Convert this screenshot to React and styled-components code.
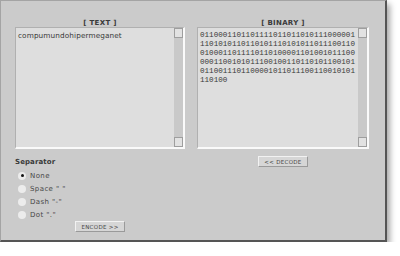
import React from 'react'
import styled, { createGlobalStyle } from 'styled-components'

const GlobalStyle = createGlobalStyle`
  html, body {
    margin: 0;
    padding: 0;
    background: #fff;
  }
  body {
    font-family: 'DejaVu Sans', Verdana, sans-serif;
  }
`

const Panel = styled.div`
  box-sizing: border-box;
  width: 387px;
  height: 242px;
  background: #cbcbcb;
  border-top: 1px solid #a4a4a4;
  border-left: 1px solid #a4a4a4;
  border-right: 2px solid #555;
  border-bottom: 2px solid #555;
  box-shadow: 3px 4px 6px rgba(0, 0, 0, 0.35);
  padding: 18px 0 0 14px;
  display: grid;
  grid-template-columns: 170px 172px;
  column-gap: 12px;
  align-items: start;
`

const Column = styled.div`
  display: flex;
  flex-direction: column;
`

const Heading = styled.div`
  height: 8px;
  line-height: 9px;
  text-align: center;
  font-size: 7px;
  font-weight: bold;
  letter-spacing: 0.3px;
  color: #3a3a3a;
`

const Box = styled.div`
  box-sizing: border-box;
  height: 122px;
  display: flex;
  background: #dedede;
  border-top: 1px solid #b0b0b0;
  border-left: 1px solid #b0b0b0;
  border-right: 2px solid #fafafa;
  border-bottom: 2px solid #fafafa;
`

const Content = styled.div`
  flex: 1;
  padding: 3px 2px;
  color: #3a3a3a;
  font-size: ${p => (p.$mono ? '7.6px' : '7.3px')};
  font-family: ${p => (p.$mono ? "'Liberation Mono', 'Courier New', monospace" : "'DejaVu Sans', Verdana, sans-serif")};
  line-height: 9px;
  letter-spacing: ${p => (p.$mono ? '0' : '0.1px')};
  white-space: pre;
`

const Scroll = styled.div`
  width: 9px;
  display: flex;
  flex-direction: column;
  justify-content: space-between;
  background: #c9c9c9;
`

const ScrollCap = styled.div`
  box-sizing: border-box;
  height: 10px;
  background: #e2e2e2;
  border: 1px solid #9e9e9e;
`

const SeparatorBlock = styled.div`
  display: flex;
  flex-direction: column;
  padding-top: 9px;
`

const SeparatorTitle = styled.div`
  font-size: 7px;
  font-weight: bold;
  color: #3a3a3a;
  height: 9px;
  line-height: 9px;
  letter-spacing: 0.1px;
  margin-bottom: 2px;
`

const RadioRow = styled.label`
  display: flex;
  align-items: center;
  gap: 4px;
  height: 13px;
  padding-left: 3px;
  font-size: 7px;
  letter-spacing: 0.4px;
  color: #484848;
`

const RadioDot = styled.span`
  box-sizing: border-box;
  width: 8px;
  height: 8px;
  border-radius: 50%;
  background: #ececec;
  display: flex;
  align-items: center;
  justify-content: center;

  &::after {
    content: '';
    width: 3px;
    height: 3px;
    border-radius: 50%;
    background: ${p => (p.$checked ? '#111' : 'transparent')};
  }
`

const ButtonRow = styled.div`
  display: flex;
  justify-content: center;
  margin-top: ${p => p.$top}px;
`

const Button = styled.div`
  box-sizing: border-box;
  width: 50px;
  height: 11px;
  display: flex;
  align-items: center;
  justify-content: center;
  background: #d6d6d6;
  border-top: 1px solid #f2f2f2;
  border-left: 1px solid #f2f2f2;
  border-right: 1px solid #9a9a9a;
  border-bottom: 1px solid #9a9a9a;
  font-size: 5.5px;
  letter-spacing: 0.3px;
  color: #444;
`

const TEXT = 'compumundohipermeganet'

const toBinary = str =>
  str
    .split('')
    .map(c => c.charCodeAt(0).toString(2).padStart(8, '0'))
    .join('')

const chunk = (s, n) => {
  const out = []
  for (let i = 0; i < s.length; i += n) out.push(s.slice(i, i + n))
  return out
}

const separators = [
  { label: 'None', checked: true },
  { label: 'Space " "' },
  { label: 'Dash "-"' },
  { label: 'Dot "."' },
]

const TextBox = ({ mono, children }) => (
  <Box>
    <Content $mono={mono}>{children}</Content>
    <Scroll>
      <ScrollCap />
      <ScrollCap />
    </Scroll>
  </Box>
)

const App = () => {
  const lines = chunk(toBinary(TEXT), 34)

  return (
    <>
      <GlobalStyle />
      <Panel>
        <Column>
          <Heading>[ TEXT ]</Heading>
          <TextBox>{TEXT}</TextBox>
          <SeparatorBlock>
            <SeparatorTitle>Separator</SeparatorTitle>
            {separators.map(s => (
              <RadioRow key={s.label}>
                <RadioDot $checked={s.checked} />
                {s.label}
              </RadioRow>
            ))}
          </SeparatorBlock>
          <ButtonRow $top={0}>
            <Button>ENCODE &gt;&gt;</Button>
          </ButtonRow>
        </Column>
        <Column>
          <Heading>[ BINARY ]</Heading>
          <TextBox mono>{lines.join('\n')}</TextBox>
          <ButtonRow $top={7}>
            <Button>&lt;&lt; DECODE</Button>
          </ButtonRow>
        </Column>
      </Panel>
    </>
  )
}

export default App
